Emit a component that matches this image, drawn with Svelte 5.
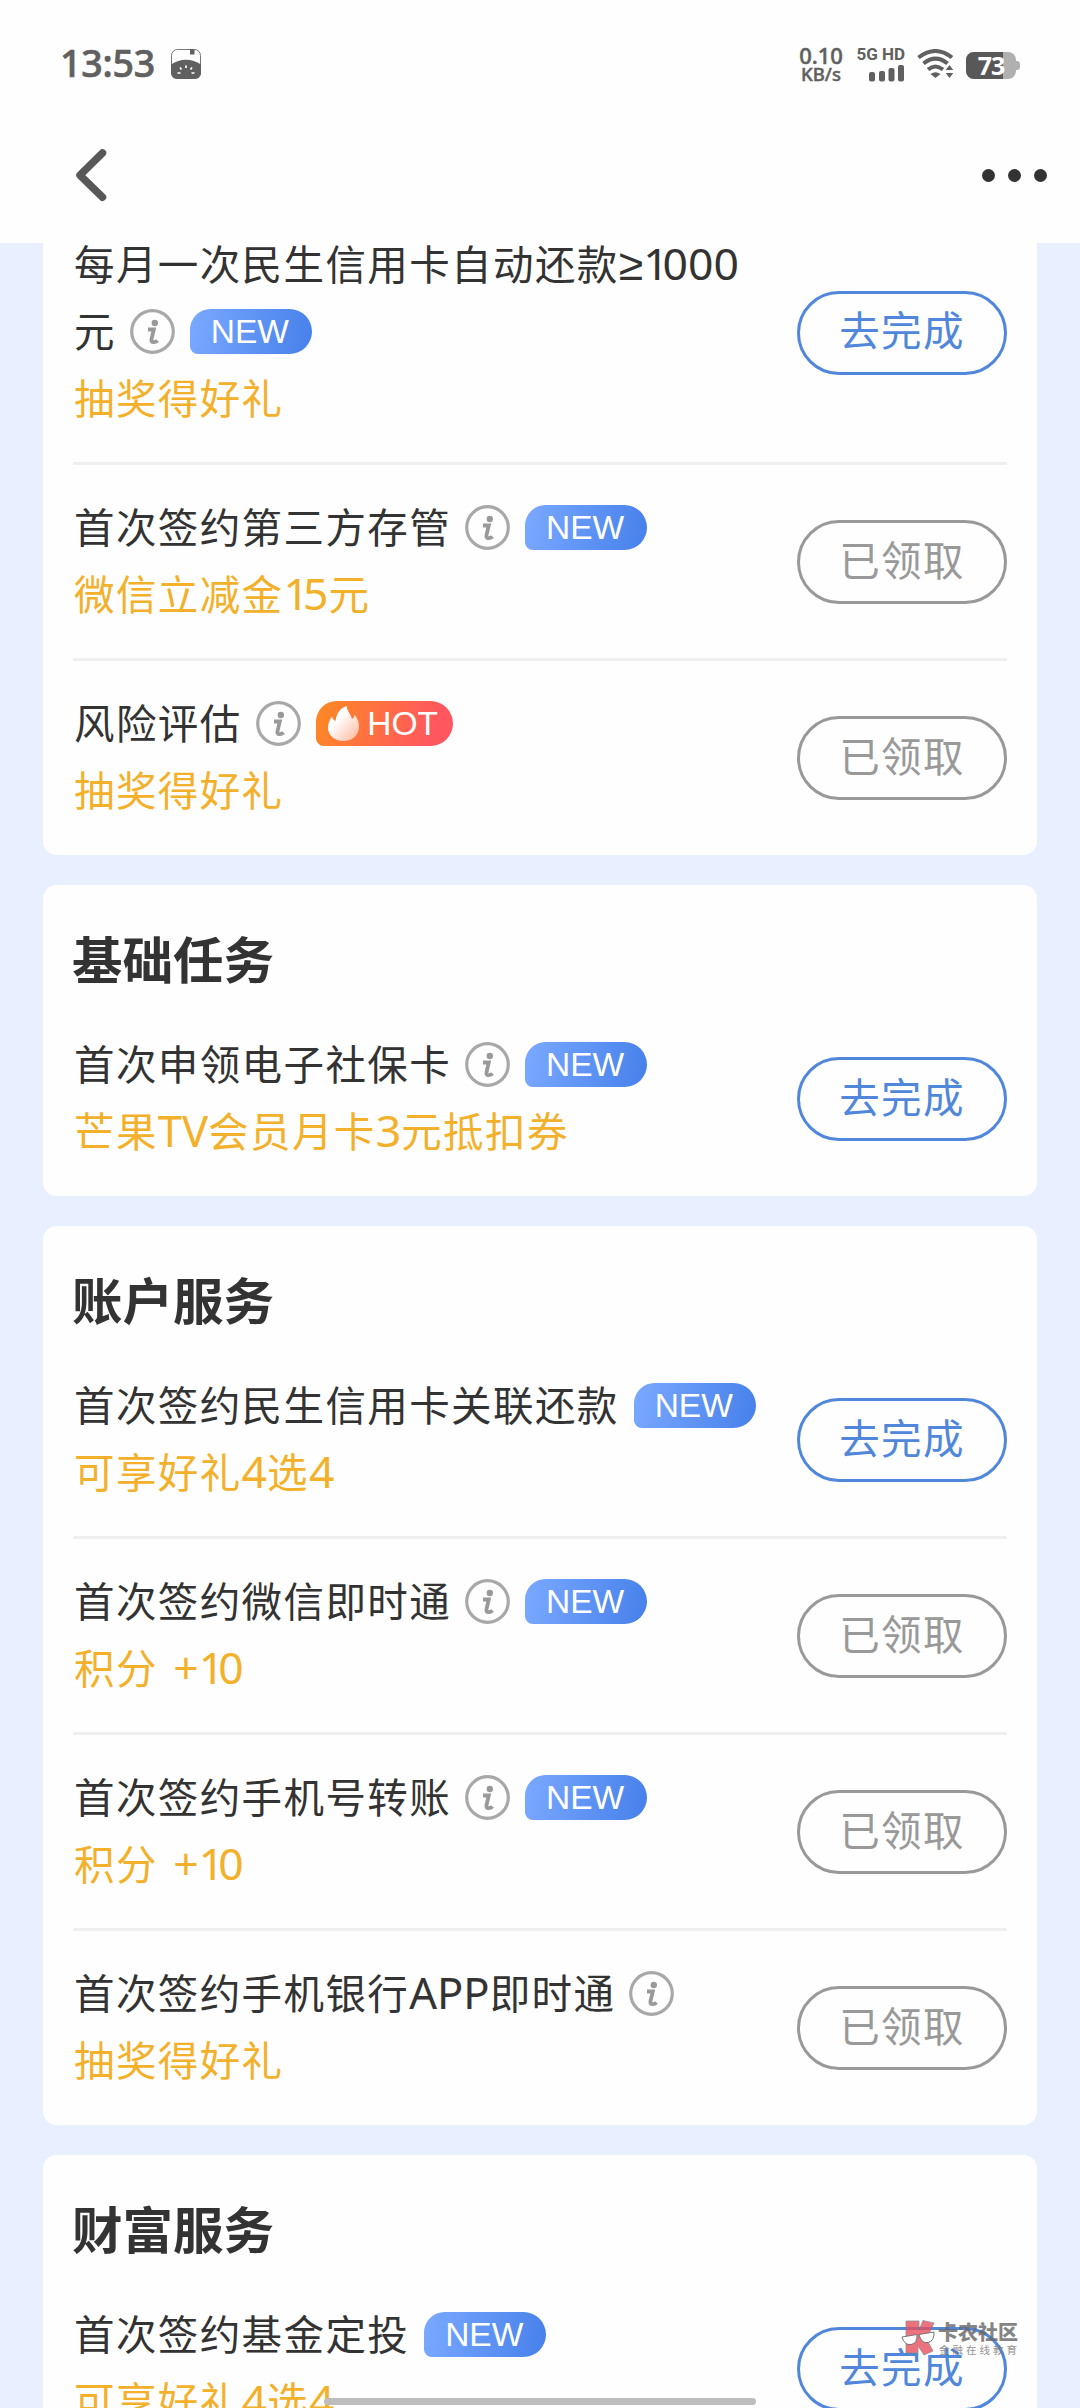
<script>
  const sections = [
    {
      title: '',
      tasks: [
        { name: '每月一次民生信用卡自动还款≥1000元', reward: '抽奖得好礼', info: true, tag: 'NEW', done: false },
        { name: '首次签约第三方存管', reward: '微信立减金15元', info: true, tag: 'NEW', done: true },
        { name: '风险评估', reward: '抽奖得好礼', info: true, tag: 'HOT', done: true },
      ],
    },
    {
      title: '基础任务',
      tasks: [
        { name: '首次申领电子社保卡', reward: '芒果TV会员月卡3元抵扣券', info: true, tag: 'NEW', done: false },
      ],
    },
    {
      title: '账户服务',
      tasks: [
        { name: '首次签约民生信用卡关联还款', reward: '可享好礼4选4', info: false, tag: 'NEW', done: false },
        { name: '首次签约微信即时通', reward: '积分 +10', info: true, tag: 'NEW', done: true },
        { name: '首次签约手机号转账', reward: '积分 +10', info: true, tag: 'NEW', done: true },
        { name: '首次签约手机银行APP即时通', reward: '抽奖得好礼', info: true, tag: '', done: true },
      ],
    },
    {
      title: '财富服务',
      tasks: [
        { name: '首次签约基金定投', reward: '可享好礼4选4', info: false, tag: 'NEW', done: false },
      ],
    },
  ];

  // latin runs are set a little larger than the hanzi around them
  function runs(text) {
    return text.split(/(1|[A-Z]+|[≥+02-9]+)/).filter(Boolean).map((t) => ({
      t,
      latin: /^[≥+A-Z0-9]/.test(t),
      one: t === '1',
      caps: /^[A-Z]/.test(t),
    }));
  }
</script>

{#snippet mixed(text)}{#each runs(text) as r}{#if r.latin}<span class="latin" class:one={r.one} class:caps={r.caps}>{r.t}</span>{:else}{r.t}{/if}{/each}{/snippet}

<div class="page">
  <header>
    <div class="status">
      <span class="time">13:53</span>
      <svg class="app-icon" width="30" height="30" viewBox="0 0 30 30">
        <rect x=".5" y=".5" width="29" height="29" rx="6" fill="#fff" stroke="#777" />
        <path d="M0 15.500Q7 10.800 15 10.800T30 15.500V24a6 6 0 0 1-6 6H6a6 6 0 0 1-6-6z" fill="#606060" />
        <path d="M19 0h4.500v5.500H19z" fill="#606060" />
        <path d="M15 16.500v2.500M9 18.500l1.500 2M21 18.500l-1.500 2M6.500 24h3M20.500 24h3" stroke="#fff" stroke-width="1.700" />
      </svg>
      <div class="status-right">
        <div class="speed"><b>0.10</b><span>KB/s</span></div>
        <div class="signal">
          <span>5G HD</span>
          <svg width="36" height="17" viewBox="0 0 36 17" fill="#606060">
            <rect x="0" y="7" width="6" height="9.500" rx="2" />
            <rect x="10" y="6" width="6" height="10.500" rx="2" />
            <rect x="19.500" y="3" width="6" height="13.500" rx="2" />
            <rect x="29" y="0" width="6" height="16.500" rx="2" />
          </svg>
        </div>
        <svg class="wifi" width="37" height="30" viewBox="0 0 37 30" fill="none">
          <path d="M1.500 8.500Q18.500-4.500 35 8.500" stroke="#606060" stroke-width="4" />
          <path d="M6.500 14.500Q18.500 4.800 30.500 14.500" stroke="#606060" stroke-width="4" />
          <path d="M11 20.500Q18.500 14.500 26 20.500" stroke="#606060" stroke-width="4" />
          <path d="M13.500 25Q18.500 21.500 23.500 25L18.500 29z" fill="#606060" />
          <path d="M32.500 13l6 10.500-6 8-6-8z" fill="#fff" />
          <path d="M32.500 16l3.800 5h-7.600zM32.500 29l3.800-5h-7.600z" fill="#606060" />
        </svg>
        <div class="battery"><div class="level"></div><span>73</span></div>
      </div>
    </div>
    <nav>
      <svg width="36" height="60" viewBox="0 0 36 60" fill="none" stroke="#585858" stroke-width="7.500" stroke-linecap="round" stroke-linejoin="round">
        <path d="M28.500 8L6 30.200l22.500 22" />
      </svg>
      <div class="dots"><i></i><i></i><i></i></div>
    </nav>
  </header>

  <main>
    {#each sections as section}
      <section class="card">
        {#if section.title}<h2>{section.title}</h2>{/if}
        {#each section.tasks as task}
          <div class="task" class:lead={!section.title && task === section.tasks[0]}>
            <div class="text">
              <div class="name">{@render mixed(task.name)}{#if task.info}<svg class="info" width="45" height="45" viewBox="0 0 45 45">
                <circle cx="22.500" cy="22.500" r="20.800" fill="none" stroke="#a8a8a8" stroke-width="3.200" />
                <circle cx="24.800" cy="14" r="3.200" fill="#999" />
                <path d="M18 20.500h5.800l-2.300 9.500q-.500 3.200 2 3.200t4-1.700" fill="none" stroke="#999" stroke-width="3.800" />
              </svg>{/if}{#if task.tag}<span class="tag" class:hot={task.tag === 'HOT'}>{#if task.tag === 'HOT'}<svg width="31" height="35" viewBox="0 0 31 35">
                <defs>
                  <linearGradient id="flame" x1="0" y1="0" x2="1" y2="1">
                    <stop offset=".35" stop-color="#fff" />
                    <stop offset="1" stop-color="#ffb49a" />
                  </linearGradient>
                </defs>
                <path d="M18.500 0c1 6 4.500 8.500 5.500 13 1.500-1 2.500-2.500 2.500-4.500 3 4 4.500 7.500 4.500 12C31 29 24.500 35 15.500 35S0 29.500 0 21.500c0-4.500 2-8 4-11 .500 2 1.500 3.500 3.500 4.500C8.500 8 12 2 18.500 0z" fill="url(#flame)" />
              </svg>{/if}{task.tag}</span>{/if}</div>
              <div class="reward">{@render mixed(task.reward)}</div>
            </div>
            <button class:done={task.done}>{task.done ? '已领取' : '去完成'}</button>
          </div>
        {/each}
      </section>
    {/each}
  </main>

  <div class="watermark">
    <svg width="34" height="36" viewBox="0 0 34 36">
      <path d="M5 1h13v9l4-9.500 11 2.500-5 11-2 6 6 11-9 4-6-9v7H5z" fill="#e8505f" stroke="#777" stroke-width=".8" />
      <path d="M1 17l15-2.500q.500 9-6 10T1 17zM18 14.500l15-2.500q.500 9-6 10.500t-9-8z" fill="#fff" stroke="#555" stroke-width="1" />
    </svg>
    <div>
      <strong>卡农社区</strong>
      <small>金融在线教育</small>
    </div>
  </div>
  <div class="home-bar"></div>
</div>

<style>
  :global(body) { background: #e8f0ff; }
  .page {
    position: relative; width: 1080px; height: 2408px; overflow: hidden;
    background: #e8f0ff; color: #333;
    font-family: "Noto Sans CJK SC", sans-serif;
  }
  header { position: relative; z-index: 1; height: 243px; background: #fefefe; }
  .status {
    display: flex; align-items: center; height: 128px; padding: 0 60px;
    box-sizing: border-box; color: #606060; font-family: "Noto Sans", sans-serif;
  }
  .time { width: 94px; margin-top: -2px; font-size: 37.5px; font-weight: 500; line-height: 40px; letter-spacing: -.2px; -webkit-text-stroke: .7px #606060; }
  .app-icon { margin-left: 17px; }
  .status-right { display: flex; align-items: center; margin-left: auto; }
  .speed { display: flex; flex-direction: column; align-items: center; width: 46px; -webkit-text-stroke: .5px #606060; }
  .speed b { font-size: 22px; line-height: 19px; font-weight: 500; }
  .speed span { font-size: 18.5px; line-height: 17px; font-weight: 500; }
  .signal {
    display: flex; flex-direction: column; align-items: flex-end; gap: 4px;
    width: 49px; margin-left: 12px;
    font: 700 17px/14px Roboto, sans-serif; white-space: nowrap;
  }
  .wifi { margin-left: 12px; }
  .battery {
    position: relative; width: 50px; height: 27px; margin: 2px 4px 0 12px;
    border-radius: 8px; background: #b0b0b0; color: #fff; text-align: center;
  }
  .battery::after {
    content: ''; position: absolute; right: -4px; top: 9px;
    width: 4px; height: 9px; border-radius: 0 3px 3px 0; background: #b0b0b0;
  }
  .level { position: absolute; inset: 0 13px 0 0; border-radius: 8px 0 0 8px; background: #585858; }
  .battery span { position: relative; display: block; font-size: 25px; font-weight: 700; line-height: 27px; letter-spacing: -1px; }

  nav { display: flex; align-items: center; justify-content: space-between; height: 94px; padding: 0 33px 0 74px; }
  .dots { display: flex; gap: 13px; }
  .dots i { width: 13px; height: 13px; border-radius: 50%; background: #333; }

  main { display: flex; flex-direction: column; gap: 30px; margin-top: -14px; padding: 0 43px; }
  .card { padding: 0 30px; border-radius: 14px; background: #fefefe; }
  h2 { height: 117px; margin: 0 0 0 -1px; padding-top: 35px; box-sizing: border-box; font-size: 50.5px; line-height: 74px; font-weight: 700; }
  .task {
    display: flex; align-items: center; justify-content: space-between;
    padding: 27px 0 32px; border-bottom: 3px solid #efefef;
  }
  .task.lead { padding-top: 0; }
  .task:last-child { padding-bottom: 33px; border-bottom: none; }
  .text { width: 700px; padding-left: 1px; font-size: 40.5px; line-height: 67px; letter-spacing: 1.4px; }
  .name, .reward { min-height: 67px; }
  .reward { color: #f3b02b; word-spacing: 5px; }
  .latin { font-family: "Noto Sans", sans-serif; font-size: 44.5px; line-height: 0; letter-spacing: 0; }
  .latin.one { letter-spacing: -6px; }
  .latin.caps { font-size: 43.5px; }
  .info { margin: 13px 0 0 14px; vertical-align: top; }
  .tag {
    display: inline-flex; align-items: center; justify-content: center;
    width: 122px; height: 45px; margin: 13px 0 0 15px; vertical-align: top;
    padding-right: 2px; box-sizing: border-box;
    border-radius: 21px 23px 23px 8px;
    background: linear-gradient(100deg, #7aa9ff, #4680ea);
    color: #fff; font: 33.5px/45px "Liberation Sans", Arial, sans-serif; letter-spacing: 0;
  }
  .tag.hot { width: 137px; gap: 8px; background: linear-gradient(110deg, #ff8a22, #ff5660 85%); }
  button {
    width: 210px; height: 84px; margin-top: 6px; padding: 0 0 7px;
    border: 3px solid #5087db; border-radius: 42px; background: none;
    color: #5087db; font: 40.5px/60px "Noto Sans CJK SC", sans-serif; letter-spacing: 1.4px;
  }
  button.done { border-color: #999; color: #999; }

  .watermark { position: absolute; left: 901px; top: 2320px; display: flex; gap: 3px; opacity: .8; }
  .watermark div { display: flex; flex-direction: column; }
  .watermark strong { font-size: 20px; line-height: 23px; font-weight: 900; color: #666; }
  .watermark small { padding-left: 1px; font-size: 10.5px; line-height: 14px; letter-spacing: 3px; color: #777; }
  .home-bar { position: absolute; left: 324px; top: 2398px; width: 432px; height: 7px; border-radius: 4px; background: #bdbdbd; }
</style>
